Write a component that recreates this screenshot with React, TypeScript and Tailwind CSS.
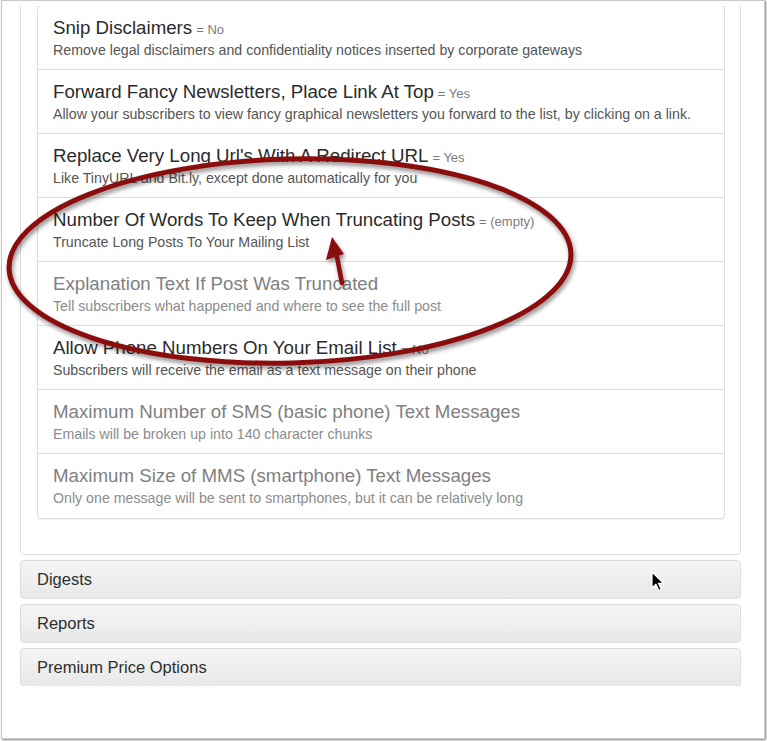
import React from 'react';

type Setting = {
  title: string;
  value?: string;
  desc: string;
  disabled?: boolean;
};

const settings: Setting[] = [
  { title: 'Snip Disclaimers', value: 'No', desc: 'Remove legal disclaimers and confidentiality notices inserted by corporate gateways' },
  { title: 'Forward Fancy Newsletters, Place Link At Top', value: 'Yes', desc: 'Allow your subscribers to view fancy graphical newsletters you forward to the list, by clicking on a link.' },
  { title: "Replace Very Long Url's With A Redirect URL", value: 'Yes', desc: 'Like TinyURL and Bit.ly, except done automatically for you' },
  { title: 'Number Of Words To Keep When Truncating Posts', value: '(empty)', desc: 'Truncate Long Posts To Your Mailing List' },
  { title: 'Explanation Text If Post Was Truncated', desc: 'Tell subscribers what happened and where to see the full post', disabled: true },
  { title: 'Allow Phone Numbers On Your Email List', value: 'No', desc: 'Subscribers will receive the email as a text message on their phone' },
  { title: 'Maximum Number of SMS (basic phone) Text Messages', desc: 'Emails will be broken up into 140 character chunks', disabled: true },
  { title: 'Maximum Size of MMS (smartphone) Text Messages', desc: 'Only one message will be sent to smartphones, but it can be relatively long', disabled: true },
];

const sections = ['Digests', 'Reports', 'Premium Price Options'];

const SettingRow = ({ s, last }: { s: Setting; last: boolean }) => (
  <div className={`h-[64px] px-[15px] pt-[11px] ${last ? '' : 'border-b border-[#dddddd]'}`}>
    <div className="h-[22px] leading-[22px] whitespace-nowrap">
      <span className={`text-[18.7px] ${s.disabled ? 'text-[#808080]' : 'text-[#2b2b2b]'}`}>{s.title}</span>
      {s.value && <span className="ml-[4px] text-[13px] text-[#7a7a7a]">= {s.value}</span>}
    </div>
    <div className={`mt-px h-[20px] leading-[20px] text-[14.2px] whitespace-nowrap ${s.disabled ? 'text-[#8c8c8c]' : 'text-[#555555]'}`}>
      {s.desc}
    </div>
  </div>
);

const Annotation = () => (
  <svg className="absolute left-0 top-0 pointer-events-none" width="767" height="741" viewBox="0 0 767 741">
    <defs>
      <filter id="shadow" x="-10%" y="-10%" width="120%" height="130%">
        <feDropShadow dx="1.5" dy="3" stdDeviation="2" floodColor="#000" floodOpacity="0.45" />
      </filter>
    </defs>
    <g filter="url(#shadow)">
      <ellipse
        cx="290"
        cy="261"
        rx="281"
        ry="102"
        transform="rotate(-1.5 290 261)"
        fill="none"
        stroke="#8a0c0c"
        strokeWidth="5"
      />
      <line x1="342" y1="283" x2="336" y2="252" stroke="#8a0c0c" strokeWidth="4.5" strokeLinecap="round" />
      <polygon points="332,237 344,254 326,260" fill="#8a0c0c" />
    </g>
  </svg>
);

const Cursor = () => (
  <svg className="absolute left-[651px] top-[571px] pointer-events-none" width="14" height="22" viewBox="0 0 14 22">
    <path d="M1 1 L1 17 L5 13.2 L7.8 19.5 L10.2 18.5 L7.5 12.3 L12.5 12.3 Z" fill="#000" stroke="#fff" strokeWidth="1.2" strokeLinejoin="round" />
  </svg>
);

export default function App() {
  return (
    <div className="relative w-[767px] h-[741px] overflow-hidden bg-white font-['Liberation_Sans',Arial,sans-serif]">
      <div className="ml-px w-[764px] h-[739px] border border-[#c8c8c8] bg-white shadow-[1px_1px_2px_rgba(0,0,0,0.5)]">
        <div className="mt-[5px] h-[680px] overflow-hidden">
          <div className="ml-[18px] w-[721px]">
            <div className="-mt-[18px] border border-[#dddddd] rounded-[4px] bg-white pl-4 pr-[15px] pt-4 pb-[35px]">
              <div className="w-[688px] border border-[#dddddd] rounded-[4px] bg-white shadow-[0_1px_1px_rgba(0,0,0,0.05)]">
                {settings.map((s, i) => (
                  <SettingRow key={s.title} s={s} last={i === settings.length - 1} />
                ))}
              </div>
            </div>
            {sections.map((name) => (
              <div
                key={name}
                className="mt-[5px] h-[39px] flex items-center px-4 border border-[#dddddd] rounded-[4px] bg-gradient-to-b from-[#f5f5f5] to-[#e8e8e8] text-[16.5px] text-[#2e2e2e]"
              >
                {name}
              </div>
            ))}
          </div>
        </div>
      </div>
      <Annotation />
      <Cursor />
    </div>
  );
}
